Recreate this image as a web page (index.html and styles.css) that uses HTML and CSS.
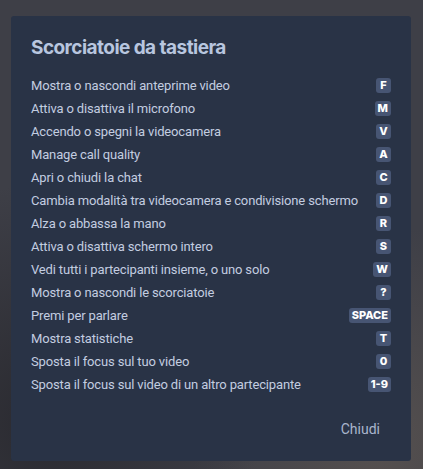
FILE: index.html
```html
<!DOCTYPE html>
<html lang="it">
<head>
  <meta charset="UTF-8" />
  <meta name="viewport" content="width=device-width, initial-scale=1.0" />
  <title>Scorciatoie da tastiera</title>
  <link rel="stylesheet" href="styles.css">
</head>
<body>
  <div class="backdrop">
    <div class="dialog">
      <h1 class="dialog-title">Scorciatoie da tastiera</h1>
      <ul class="shortcuts">
        <li class="shortcut"><span class="label">Mostra o nascondi anteprime video</span><kbd class="key">F</kbd></li>
        <li class="shortcut"><span class="label">Attiva o disattiva il microfono</span><kbd class="key">M</kbd></li>
        <li class="shortcut"><span class="label">Accendo o spegni la videocamera</span><kbd class="key">V</kbd></li>
        <li class="shortcut"><span class="label">Manage call quality</span><kbd class="key">A</kbd></li>
        <li class="shortcut"><span class="label">Apri o chiudi la chat</span><kbd class="key">C</kbd></li>
        <li class="shortcut"><span class="label">Cambia modalità tra videocamera e condivisione schermo</span><kbd class="key">D</kbd></li>
        <li class="shortcut"><span class="label">Alza o abbassa la mano</span><kbd class="key">R</kbd></li>
        <li class="shortcut"><span class="label">Attiva o disattiva schermo intero</span><kbd class="key">S</kbd></li>
        <li class="shortcut"><span class="label">Vedi tutti i partecipanti insieme, o uno solo</span><kbd class="key">W</kbd></li>
        <li class="shortcut"><span class="label">Mostra o nascondi le scorciatoie</span><kbd class="key">?</kbd></li>
        <li class="shortcut"><span class="label">Premi per parlare</span><kbd class="key">SPACE</kbd></li>
        <li class="shortcut"><span class="label">Mostra statistiche</span><kbd class="key">T</kbd></li>
        <li class="shortcut"><span class="label">Sposta il focus sul tuo video</span><kbd class="key">0</kbd></li>
        <li class="shortcut"><span class="label">Sposta il focus sul video di un altro partecipante</span><kbd class="key">1-9</kbd></li>
      </ul>
      <div class="dialog-footer">
        <button class="btn-close">Chiudi</button>
      </div>
    </div>
  </div>
</body>
</html>
```

FILE: styles.css
```css
body { margin: 0; font-family: Roboto, "Noto Sans", sans-serif; }
.backdrop {
  width: 423px; height: 469px; box-sizing: border-box;
  padding: 16px 12px 0 11px;
  background: radial-gradient(ellipse at 10% 90%, #2a2a30 0%, transparent 40%),
              radial-gradient(ellipse at 90% 95%, #55504f 0%, transparent 35%),
              #3e3f47;
}
.dialog {
  width: 400px; height: 445px; box-sizing: border-box;
  background: #293346; border-radius: 3px;
  padding: 20px 20px 0 20px;
  display: flex; flex-direction: column;
}
.dialog-title {
  margin: 0 0 14px 0; font-family: Inter, sans-serif; font-size: 19px; font-weight: 700;
  color: #b8c6df; line-height: 24px; letter-spacing: -0.55px;
}
.shortcuts { list-style: none; margin: 0; padding: 0; }
.shortcut {
  display: flex; justify-content: space-between; align-items: center;
  height: 23px; font-size: 13px; letter-spacing: -0.15px; color: #c3cde0; white-space: nowrap;
}
.key {
  font-family: Inter, "Noto Sans", sans-serif; font-size: 11px; font-weight: 800;
  color: #fff; background: #475573; border-radius: 3px; letter-spacing: 0;
  min-width: 15px; height: 15px; line-height: 15px; padding: 0 3px;
  box-sizing: border-box; text-align: center;
}
.dialog-footer { display: flex; justify-content: flex-end; padding-top: 25px; }
.btn-close {
  background: none; border: none; padding: 0 11px 0 0;
  font-family: Roboto, "Noto Sans", sans-serif; font-size: 14px; color: #a9b6cd;
}
```
